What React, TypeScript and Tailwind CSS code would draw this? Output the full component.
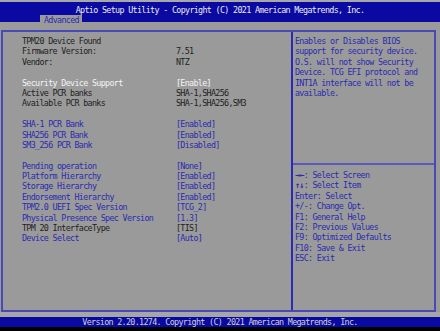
import React from "react";

type Row = { l?: string; v?: string; c?: "d" | "b" | "w" };

const rows: Row[] = [
  { l: "TPM20 Device Found", c: "d" },
  { l: "Firmware Version:", v: "7.51", c: "d" },
  { l: "Vendor:", v: "NTZ", c: "d" },
  {},
  { l: "Security Device Support", v: "[Enable]", c: "w" },
  { l: "Active PCR banks", v: "SHA-1,SHA256", c: "d" },
  { l: "Available PCR banks", v: "SHA-1,SHA256,SM3", c: "d" },
  {},
  { l: "SHA-1 PCR Bank", v: "[Enabled]", c: "b" },
  { l: "SHA256 PCR Bank", v: "[Enabled]", c: "b" },
  { l: "SM3_256 PCR Bank", v: "[Disabled]", c: "b" },
  {},
  { l: "Pending operation", v: "[None]", c: "b" },
  { l: "Platform Hierarchy", v: "[Enabled]", c: "b" },
  { l: "Storage Hierarchy", v: "[Enabled]", c: "b" },
  { l: "Endorsement Hierarchy", v: "[Enabled]", c: "b" },
  { l: "TPM2.0 UEFI Spec Version", v: "[TCG_2]", c: "b" },
  { l: "Physical Presence Spec Version", v: "[1.3]", c: "b" },
  { l: "TPM 20 InterfaceType", v: "[TIS]", c: "d" },
  { l: "Device Select", v: "[Auto]", c: "b" },
];

const colorCls = (c?: string) =>
  c === "w" ? "text-[#f4f4f4]" : c === "b" ? "text-[#2a2ab2]" : "text-[#1e1e1e]";

const help = [
  "Enables or Disables BIOS",
  "support for security device.",
  "O.S. will not show Security",
  "Device. TCG EFI protocol and",
  "INT1A interface will not be",
  "available.",
];

const keys: [string, string][] = [
  ["\u2192\u2190", ": Select Screen"],
  ["\u2191\u2193", ": Select Item"],
  ["", "Enter: Select"],
  ["", "+/-: Change Opt."],
  ["", "F1: General Help"],
  ["", "F2: Previous Values"],
  ["", "F9: Optimized Defaults"],
  ["", "F10: Save & Exit"],
  ["", "ESC: Exit"],
];

export default function App() {
  return (
    <div
      className="w-[440px] h-[331px] bg-[#9a9a9a] flex flex-col overflow-hidden text-[8.4px] tracking-[-0.67px] leading-[10.4px] whitespace-pre"
      style={{ fontFamily: '"DejaVu Sans Mono", "Liberation Mono", monospace' }}
    >
      <div className="h-[2px] bg-[#a8a8a8]" />
      <div className="h-[20px] bg-[#0a0aa2]">
        <div className="pt-[3px] text-center text-[#ececec]">
          Aptio Setup Utility - Copyright (C) 2021 American Megatrends, Inc.
        </div>
      </div>
      <div className="-mt-[7px] ml-[40px] w-[42px] h-[10px] bg-[#9a9a9a] pl-[4px] text-[#2a2ab2]">
        Advanced
      </div>
      <div className="h-[5px]" />
      <div className="ml-[1px] w-[435px] h-[282px] border-2 border-[#4848b6] flex">
        <div className="w-[288px] pl-[19px] pt-[4px] flex flex-col">
          {rows.map((r, i) => (
            <div key={i} className={`h-[10.4px] flex ${colorCls(r.c)}`}>
              <span className="w-[154px]">{r.l ?? ""}</span>
              <span>{r.v ?? ""}</span>
            </div>
          ))}
        </div>
        <div className="w-[2px] bg-[#2a2ab4]" />
        <div className="flex-1 flex flex-col text-[#2a2ab2]">
          <div className="h-[131px] pl-[2px] pt-[4px]">
            {help.map((h, i) => (
              <div key={i} className="h-[10.4px]">{h}</div>
            ))}
          </div>
          <div className="h-[2px] bg-[#5a5abc]" />
          <div className="pl-[2px] pt-[5px]">
            {keys.map((k, i) => (
              <div key={i} className="h-[10.4px]">
                {k[0] && <span className="font-bold">{k[0]}</span>}
                {k[1]}
              </div>
            ))}
          </div>
        </div>
      </div>
      <div className="h-[5px] bg-[#a6a6a6]" />
      <div className="h-[10px] bg-[#0a0aa2] text-center text-[#d0d0d0] leading-[10px]">
        Version 2.20.1274. Copyright (C) 2021 American Megatrends, Inc.
      </div>
      <div className="flex-1 bg-black" />
    </div>
  );
}
